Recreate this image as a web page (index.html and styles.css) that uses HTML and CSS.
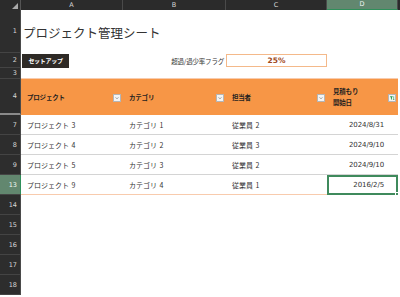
FILE: index.html
```html
<!DOCTYPE html>
<html lang="ja">
<head>
<meta charset="utf-8">
<link rel="stylesheet" href="styles.css">
</head>
<body>
<div class="sheet">
  <div class="row colhead">
    <div class="corner"><span class="tri"></span></div>
    <div class="ch">A</div>
    <div class="ch">B</div>
    <div class="ch">C</div>
    <div class="ch sel">D</div>
    <div class="ch end"></div>
  </div>

  <div class="row r1">
    <div class="rh">1</div>
    <div class="cell title span4">プロジェクト管理シート</div>
    <div class="cell"></div>
  </div>

  <div class="row r2">
    <div class="rh">2</div>
    <div class="cell"><span class="btn">セットアップ</span></div>
    <div class="cell label">超過/過少率フラグ</div>
    <div class="cell"><div class="flag">25%</div></div>
    <div class="cell"></div>
    <div class="cell"></div>
  </div>

  <div class="row r3">
    <div class="rh">3</div>
    <div class="cell span4 line-orange"></div>
    <div class="cell"></div>
  </div>

  <div class="row r4">
    <div class="rh hidden-after">4</div>
    <div class="cell th"><span>プロジェクト</span><span class="fb"><svg viewBox="0 0 8 8"><path d="M2.2 3.2 L4 5 L5.8 3.2" fill="none" stroke="#555" stroke-width="0.8"/></svg></span></div>
    <div class="cell th"><span>カテゴリ</span><span class="fb"><svg viewBox="0 0 8 8"><path d="M2.2 3.2 L4 5 L5.8 3.2" fill="none" stroke="#555" stroke-width="0.8"/></svg></span></div>
    <div class="cell th"><span>担当者</span><span class="fb"><svg viewBox="0 0 8 8"><path d="M2.2 3.2 L4 5 L5.8 3.2" fill="none" stroke="#555" stroke-width="0.8"/></svg></span></div>
    <div class="cell th"><span class="two">見積もり<br>開始日</span><span class="fb"><svg viewBox="0 0 8 8"><path d="M1.2 1.6 H5.2 L3.8 3.6 V6.4 L2.6 5.7 V3.6 Z" fill="#1f9a4f"/><path d="M6.2 1.8 V6.4 M5.3 5.5 L6.2 6.4 L7.1 5.5" fill="none" stroke="#1f9a4f" stroke-width="0.8"/></svg></span></div>
    <div class="cell"></div>
  </div>

  <div class="row data">
    <div class="rh">7</div>
    <div class="cell td">プロジェクト 3</div>
    <div class="cell td">カテゴリ 1</div>
    <div class="cell td">従業員 2</div>
    <div class="cell td num">2024/8/31</div>
    <div class="cell"></div>
  </div>
  <div class="row data">
    <div class="rh">8</div>
    <div class="cell td">プロジェクト 4</div>
    <div class="cell td">カテゴリ 2</div>
    <div class="cell td">従業員 3</div>
    <div class="cell td num">2024/9/10</div>
    <div class="cell"></div>
  </div>
  <div class="row data">
    <div class="rh">9</div>
    <div class="cell td">プロジェクト 5</div>
    <div class="cell td">カテゴリ 3</div>
    <div class="cell td">従業員 2</div>
    <div class="cell td num">2024/9/10</div>
    <div class="cell"></div>
  </div>
  <div class="row data last">
    <div class="rh rsel">13</div>
    <div class="cell td">プロジェクト 9</div>
    <div class="cell td">カテゴリ 4</div>
    <div class="cell td">従業員 1</div>
    <div class="cell td num active">2016/2/5<span class="handle"></span></div>
    <div class="cell"></div>
  </div>

  <div class="row empty"><div class="rh">14</div><div class="cell span5"></div></div>
  <div class="row empty"><div class="rh">15</div><div class="cell span5"></div></div>
  <div class="row empty"><div class="rh">16</div><div class="cell span5"></div></div>
  <div class="row empty"><div class="rh">17</div><div class="cell span5"></div></div>
  <div class="row empty"><div class="rh">18</div><div class="cell span5"></div></div>
</div>
</body>
</html>
```

FILE: styles.css
```css
* { box-sizing: border-box; }
html, body { margin: 0; padding: 0; background: #fff; }
body {
  width: 400px;
  height: 297px;
  overflow: hidden;
  font-family: "Noto Sans CJK JP", "Noto Sans", sans-serif;
  color: #333;
}
.sheet { display: flex; flex-direction: column; }
.row {
  display: grid;
  grid-template-columns: 21px 102px 103px 101px 71px 2px;
}
.span4 { grid-column: span 4; }
.span5 { grid-column: span 5; }

/* column header */
.colhead { height: 10px; }
.corner {
  background: #2b2b2b;
  border-right: 1px solid #555;
  position: relative;
}
.tri {
  position: absolute;
  right: 2px;
  bottom: 1px;
  width: 0; height: 0;
  border-left: 6px solid transparent;
  border-bottom: 6px solid #a9a9a9;
}
.ch {
  background: #2b2b2b;
  color: #d4d4d4;
  font-family: "DejaVu Sans", sans-serif;
  font-size: 6.5px;
  line-height: 10px;
  text-align: center;
  border-right: 1px solid #4a4a4a;
}
.ch.sel {
  background: #62876f;
  color: #eef5f0;
  border-bottom: 1px solid #2f8f5a;
  line-height: 9px;
}
.ch.end { border-right: none; }

/* row header */
.rh {
  background: #2d2d2d;
  color: #d6d6d6;
  font-family: "DejaVu Sans", sans-serif;
  font-size: 6.5px;
  padding-right: 3px;
  display: flex;
  align-items: center;
  justify-content: flex-end;
  border-bottom: 1px solid #444;
  border-right: 1px solid #4a4a4a;
}
.rh.hidden-after { border-bottom: 2px solid #8a8a8a; }
.rh.rsel {
  background: #62876f;
  color: #f2f7f3;
  border-right: 1px solid #2f8f5a;
}

.cell { min-width: 0; }

/* row 1 */
.r1 { height: 43px; }
.title {
  font-size: 12.5px;
  color: #333;
  display: flex;
  align-items: center;
  padding-left: 2px;
  padding-top: 2px;
  white-space: nowrap;
}

/* row 2 */
.r2 { height: 15px; }
.r2 .cell { display: flex; align-items: center; }
.btn {
  margin-left: 1px;
  background: #2e2a26;
  color: #fff;
  font-size: 6px;
  font-weight: 700;
  height: 14px;
  width: 47px;
  display: flex;
  align-items: center;
  justify-content: center;
  letter-spacing: -0.3px;
}
.label {
  justify-content: flex-end;
  font-size: 6.5px;
  color: #333;
  padding-right: 2px;
  white-space: nowrap;
  letter-spacing: -0.2px;
}
.flag {
  width: 100%;
  height: 13px;
  border: 1px solid #f4b98a;
  color: #a0481a;
  font-family: "DejaVu Sans", sans-serif;
  font-weight: 700;
  font-size: 7.5px;
  display: flex;
  align-items: center;
  justify-content: center;
}

/* row 3 */
.r3 { height: 11px; }
.line-orange { border-bottom: 1px solid #f8cbad; }

/* header row */
.r4 { height: 36px; }
.th {
  background: #f79646;
  color: #1f1f1f;
  font-size: 6.5px;
  font-weight: 700;
  display: flex;
  align-items: center;
  justify-content: space-between;
  padding-left: 6px;
  padding-right: 2px;
  letter-spacing: -0.2px;
}
.th .two { line-height: 11px; }
.fb {
  width: 8px;
  height: 8px;
  background: #f4f4f4;
  border: 1px solid #b5b5b5;
  display: flex;
  align-self: center;
  margin-top: 1px;
}
.fb svg { width: 100%; height: 100%; display: block; }

/* data rows */
.data { height: 20px; }
.td {
  font-size: 7px;
  color: #333;
  display: flex;
  align-items: center;
  padding-left: 6px;
  border-bottom: 1px solid #d4d4d4;
  white-space: nowrap;
  word-spacing: 1px;
}
.td.num {
  justify-content: flex-end;
  padding-right: 14px;
  font-family: "DejaVu Sans", sans-serif;
  font-size: 7px;
  letter-spacing: -0.1px;
}
.last .td { border-bottom: 1px solid #f8cbad; }
.td.active {
  border: 2px solid #3f8a5c;
  padding-right: 12px;
  position: relative;
}
.handle {
  position: absolute;
  right: -3px;
  bottom: -3px;
  width: 4px;
  height: 4px;
  background: #3f8a5c;
  border: 1px solid #fff;
}

.empty { height: 20px; }
```
